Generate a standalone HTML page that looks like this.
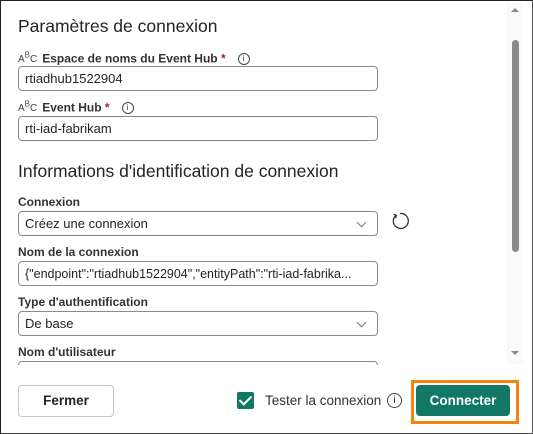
<!DOCTYPE html><html><head><style>
body{margin:0;width:533px;height:434px;overflow:hidden;background:#fff;font-family:"Liberation Sans",sans-serif;color:#242424}
.frame{position:absolute;left:0;top:0;width:531px;height:432px;border:1px solid #222;border-right-color:#555;border-bottom-color:#444}
.a{position:absolute}
h2{position:absolute;margin:0;font-size:17.5px;font-weight:normal;left:18px}
.lab{position:absolute;left:18px;font-size:12px;font-weight:bold;color:#333}
.inp{position:absolute;left:18px;border:1px solid #8a8a8a;border-radius:4px;font-size:13px;line-height:24px;padding-left:6px;box-sizing:border-box;width:360px;height:25px}
.chev{position:absolute;right:12px;top:7px;width:6px;height:6px;border-right:1px solid #777;border-bottom:1px solid #777;transform:rotate(45deg)}
.abc{font-size:10px;font-weight:normal;margin-right:5px;color:#444}
.info{display:inline-block;width:10px;height:10px;border:1px solid #444;border-radius:50%;font-size:8px;line-height:10px;text-align:center;font-weight:normal;vertical-align:middle;margin-left:12px}
</style></head><body>
<div class="frame"></div>
<h2 style="top:16px">Paramètres de connexion</h2>
<div class="lab" style="top:51px"><span class="abc">A<sup style="font-size:8px">B</sup>C</span>Espace de noms du Event Hub <span style="color:#a4262c">*</span><span class="info">i</span></div>
<div class="inp" style="top:66px">rtiadhub1522904</div>
<div class="lab" style="top:100px"><span class="abc">A<sup style="font-size:8px">B</sup>C</span>Event Hub <span style="color:#a4262c">*</span><span class="info">i</span></div>
<div class="inp" style="top:116px">rti-iad-fabrikam</div>
<h2 style="top:161px">Informations d'identification de connexion</h2>
<div class="lab" style="top:195px">Connexion</div>
<div class="inp" style="top:211px">Créez une connexion<div class="chev"></div></div>
<svg class="a" style="left:390px;top:211px" width="20" height="20" viewBox="0 0 20 20"><path d="M6 4.2 A7.5 7.5 0 1 0 10 2.5" fill="none" stroke="#333" stroke-width="1.3"/><path d="M3.5 3.2 L6.3 4.2 L5.6 7.2" fill="none" stroke="#333" stroke-width="1.3"/></svg>
<div class="lab" style="top:245px">Nom de la connexion</div>
<div class="inp" style="top:261px;font-size:12.5px;white-space:nowrap;overflow:hidden">{"endpoint":"rtiadhub1522904","entityPath":"rti-iad-fabrika...</div>
<div class="lab" style="top:295px">Type d'authentification</div>
<div class="inp" style="top:311px">De base<div class="chev"></div></div>
<div class="lab" style="top:345px">Nom d'utilisateur</div>
<div class="a" style="left:0;top:361px;width:505px;height:4px;overflow:hidden"><div class="inp" style="top:0">&nbsp;</div></div>
<div class="a" style="left:507px;top:2px;width:16px;height:362px;background:#fafafa"></div>
<div class="a" style="left:512px;top:40px;width:7px;height:212px;background:#8a8a8a;border-radius:4px"></div>
<div class="a" style="left:511px;top:8px;width:0;height:0;border:4px solid transparent;border-bottom:4px solid #888;border-top:0"></div>
<div class="a" style="left:511px;top:351px;width:0;height:0;border:4px solid transparent;border-top:4px solid #888;border-bottom:0"></div>
<div class="a" style="left:18px;top:385px;width:94px;height:30px;border:1px solid #c8c8c8;border-radius:4px;text-align:center;line-height:30px;font-size:13.5px;font-weight:bold">Fermer</div>
<div class="a" style="left:237px;top:392px;width:17px;height:17px;background:#117865;border-radius:2px"><div style="position:absolute;left:5px;top:1px;width:5px;height:10px;border-right:2px solid #fff;border-bottom:2px solid #fff;transform:rotate(45deg)"></div></div>
<div class="a" style="left:265px;top:393px;font-size:13.5px;color:#333">Tester la connexion</div>
<div class="a" style="left:387px;top:393px;width:13px;height:13px;border:1px solid #444;border-radius:50%;font-size:10px;text-align:center;line-height:13px">i</div>
<div class="a" style="left:411px;top:380px;width:102px;height:38px;border:3px solid #f5840c"></div>
<div class="a" style="left:416px;top:385px;width:94px;height:31px;background:#117865;border-radius:4px;color:#fff;font-weight:bold;font-size:13.5px;text-align:center;line-height:31px">Connecter</div>
</body></html>
